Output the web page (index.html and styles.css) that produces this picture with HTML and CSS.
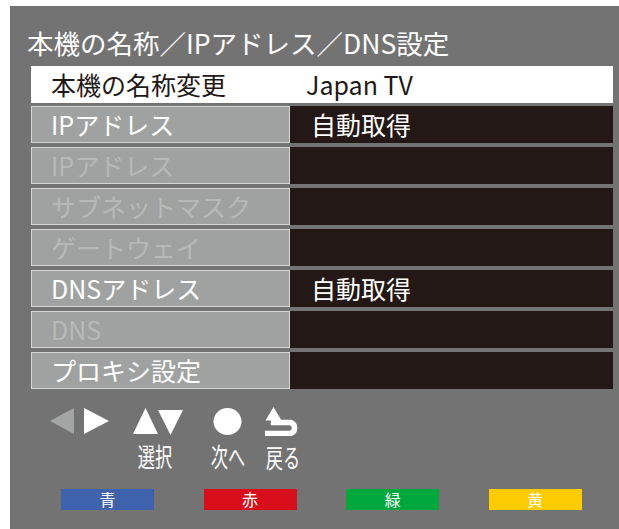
FILE: index.html
```html
<html>
<head>
	<title>本機の名称／IPアドレス／DNS設定</title>
	<link rel="stylesheet" href="styles.css">
</head>
<body>
	<div class="panel">
		<div class="title">本機の名称／IPアドレス／DNS設定</div>
		<div class="list">
			<div class="row row-name">
				<div class="label">本機の名称変更</div>
				<div class="value">Japan TV</div>
			</div>
			<div class="row">
				<div class="label">IPアドレス</div>
				<div class="value">自動取得</div>
			</div>
			<div class="row">
				<div class="label off">IPアドレス</div>
				<div class="value"></div>
			</div>
			<div class="row">
				<div class="label off">サブネットマスク</div>
				<div class="value"></div>
			</div>
			<div class="row">
				<div class="label off">ゲートウェイ</div>
				<div class="value"></div>
			</div>
			<div class="row">
				<div class="label">DNSアドレス</div>
				<div class="value">自動取得</div>
			</div>
			<div class="row">
				<div class="label off">DNS</div>
				<div class="value"></div>
			</div>
			<div class="row">
				<div class="label">プロキシ設定</div>
				<div class="value"></div>
			</div>
		</div>

		<div class="controls">
			<div class="key key-lr">
				<svg width="59" height="26" viewBox="0 0 59 26">
					<polygon points="24,0 0,13 24,26" fill="#a3a4a4"/>
					<polygon points="34,0 59,13 34,26" fill="#ffffff"/>
				</svg>
			</div>
			<div class="key key-ud">
				<svg width="50" height="27" viewBox="0 0 50 27">
					<polygon points="12.5,0 0,26 25,26" fill="#ffffff"/>
					<polygon points="25,2 50,2 37.5,27" fill="#ffffff"/>
				</svg>
				<span class="key-text">選択</span>
			</div>
			<div class="key key-ok">
				<svg width="29" height="27" viewBox="0 0 29 27">
					<ellipse cx="14.5" cy="13.5" rx="14" ry="13.5" fill="#ffffff"/>
				</svg>
				<span class="key-text">次へ</span>
			</div>
			<div class="key key-back">
				<svg width="35" height="29" viewBox="0 0 35 29">
					<polygon points="8.5,0 0.5,13.5 16.5,13.5" fill="#ffffff"/>
					<path d="M8.5 12 V15.5 H25.5 A5.75 5.75 0 0 1 25.5 26.5 H0" fill="none" stroke="#ffffff" stroke-width="5.5"/>
				</svg>
				<span class="key-text">戻る</span>
			</div>
		</div>

		<div class="colors">
			<div class="color-btn blue">青</div>
			<div class="color-btn red">赤</div>
			<div class="color-btn green">緑</div>
			<div class="color-btn yellow">黄</div>
		</div>
	</div>
</body>
</html>
```

FILE: styles.css
```css
body {
	margin: 0;
	background-color: #ffffff;
	font-family: "Noto Sans CJK JP", "Noto Sans", sans-serif;
	overflow: hidden;
}
.panel {
	margin: 6px 0 0 10px;
	width: 609px;
	height: 523px;
	box-sizing: border-box;
	padding: 22px 6px 0 17px;
	background-color: #737373;
	color: #ffffff;
}
.title {
	font-size: 26.5px;
	line-height: 30px;
	height: 30px;
	white-space: nowrap;
}
.list {
	margin: 8px 0 0 4px;
}
.row {
	display: grid;
	grid-template-columns: 259px 1fr;
	height: 37px;
	margin-bottom: 4px;
	font-size: 25px;
	line-height: 37px;
	white-space: nowrap;
}
.label {
	background-color: #a0a2a1;
	border: 1px solid #d6d6d6;
	box-sizing: border-box;
	padding-left: 19px;
	line-height: 35px;
	color: #ffffff;
}
.label.off {
	color: #b7b9b8;
}
.value {
	background-color: #231815;
	padding-left: 21px;
}
.row-name {
	margin-bottom: 3px;
	background-color: #ffffff;
	color: #231815;
}
.row-name .label {
	background-color: transparent;
	border: none;
	padding-left: 20px;
	line-height: 37px;
	color: #231815;
}
.row-name .value {
	background-color: transparent;
	padding-left: 16px;
}
.controls {
	display: flex;
	align-items: flex-start;
	margin: 19px 0 0 23px;
	height: 61px;
}
.key {
	display: flex;
	flex-direction: column;
	align-items: center;
}
.key svg {
	display: block;
}
.key-ud {
	width: 50px;
	margin-left: 24px;
}
.key-ok {
	width: 29px;
	margin-left: 30px;
}
.key-back {
	width: 35px;
	margin-left: 23px;
	margin-top: -1px;
}
.key-text {
	display: block;
	margin-top: 8px;
	font-size: 26px;
	line-height: 26px;
	white-space: nowrap;
	transform: scaleX(0.66);
}
.key-ud .key-text {
	margin-left: -6px;
}
.colors {
	display: flex;
	gap: 49.6px;
	margin: 20px 0 0 34px;
}
.color-btn {
	width: 93px;
	height: 21px;
	font-size: 16px;
	line-height: 21px;
	text-align: center;
	color: #ffffff;
}
.blue {
	background-color: #3f62ad;
}
.red {
	background-color: #d80f1b;
}
.green {
	background-color: #00a73c;
}
.yellow {
	background-color: #fccb00;
}
```
